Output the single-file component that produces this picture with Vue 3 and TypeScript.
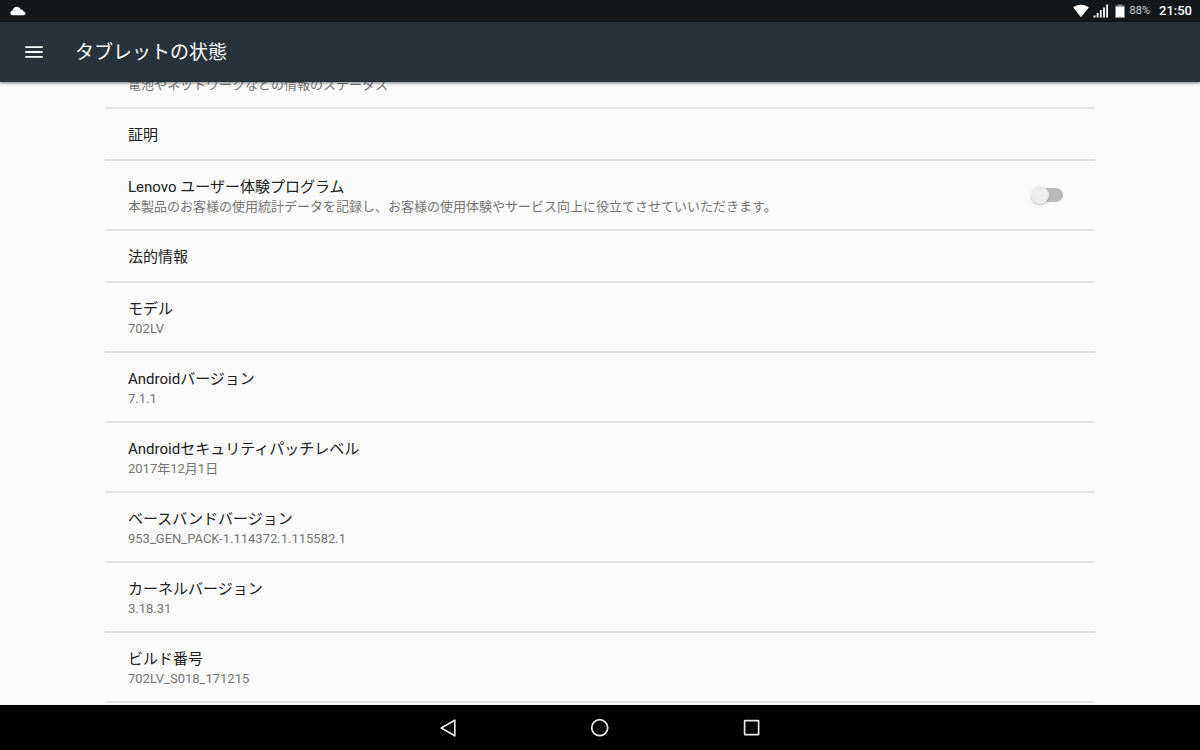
<script setup lang="ts">
import { ref } from 'vue'

interface Entry {
  title?: string
  summary?: string
  toggle?: boolean
}

const joined = ref(false)

const entries: Entry[] = [
  { summary: '電池やネットワークなどの情報のステータス' },
  { title: '証明' },
  {
    title: 'Lenovo ユーザー体験プログラム',
    summary: '本製品のお客様の使用統計データを記録し、お客様の使用体験やサービス向上に役立てさせていいただきます。',
    toggle: true,
  },
  { title: '法的情報' },
  { title: 'モデル', summary: '702LV' },
  { title: 'Androidバージョン', summary: '7.1.1' },
  { title: 'Androidセキュリティパッチレベル', summary: '2017年12月1日' },
  { title: 'ベースバンドバージョン', summary: '953_GEN_PACK-1.114372.1.115582.1' },
  { title: 'カーネルバージョン', summary: '3.18.31' },
  { title: 'ビルド番号', summary: '702LV_S018_171215' },
]
</script>

<template>
  <div class="screen" lang="ja">
    <div class="status">
      <svg class="cloud" width="16" height="10" viewBox="0 0 16 10" aria-hidden="true">
        <path d="M3 9.2C1.400 9.200.4 8.200.4 6.900.4 5.500 1.400 4.600 2.600 4.500 3.200 2.300 4.700.8 6.800.8 8.600.8 10 1.800 10.700 3.500 12.200 3.300 13.300 4.300 13.500 5.600 14.800 5.800 15.500 6.600 15.500 7.500 15.500 8.500 14.700 9.200 13.500 9.200Z" fill="#fff" />
      </svg>
      <div class="indicators">
        <svg width="16" height="14" viewBox="0 0 16 14" aria-hidden="true">
          <path d="M.2 3.400C4.800-.2 11.200-.2 15.800 3.400L8 13.200Z" fill="#fff" />
        </svg>
        <svg class="signal" width="16" height="14" viewBox="0 0 16 14" aria-hidden="true">
          <path d="M.5 11.500h2v2h-2zM3.700 9h1.800v4.500H3.700zM6.900 6h1.800v7.500H6.900zM10.100 3.500h1.800v10h-1.800zM13.200.6h1.800v12.900h-1.800z" fill="#fff" />
        </svg>
        <svg class="battery" width="10" height="14" viewBox="0 0 10 14" aria-hidden="true">
          <path d="M3 .4h4v1.200h2.500v1.200h-9V1.600H3z" fill="#8d9194" />
          <path d="M.5 2.600h9v10.900h-9z" fill="#fff" />
        </svg>
        <span class="percent">88%</span>
        <span class="clock">21:50</span>
      </div>
    </div>

    <header class="toolbar">
      <button class="menu" type="button" aria-label="メニュー">
        <svg width="18" height="12" viewBox="0 0 18 12" aria-hidden="true">
          <path d="M.3.200h17.400v1.800H.3zM.3 5.100h17.400v1.800H.3zM.3 10h17.400v1.800H.3z" fill="#fff" />
        </svg>
      </button>
      <h1>タブレットの状態</h1>
    </header>

    <main class="content">
      <ul class="list">
        <li v-for="(entry, i) in entries" :key="i" class="row" :class="{ single: !entry.summary, partial: !entry.title }">
          <component :is="entry.toggle ? 'label' : 'div'" class="text" :for="entry.toggle ? 'program' : undefined">
            <span v-if="entry.title" class="title">{{ entry.title }}</span>
            <span v-if="entry.summary" class="summary">{{ entry.summary }}</span>
          </component>
          <input v-if="entry.toggle" id="program" v-model="joined" class="switch" type="checkbox" role="switch" />
        </li>
      </ul>
    </main>

    <nav class="navbar">
      <button type="button" aria-label="戻る">
        <svg width="18" height="20" viewBox="0 0 18 20" aria-hidden="true">
          <path d="M15.800 2.200V17.800L2.200 10Z" fill="none" stroke="#e8e8e8" stroke-width="1.700" stroke-linejoin="round" />
        </svg>
      </button>
      <button type="button" aria-label="ホーム">
        <svg width="20" height="20" viewBox="0 0 20 20" aria-hidden="true">
          <circle cx="9.700" cy="9.700" r="8" fill="none" stroke="#e8e8e8" stroke-width="1.700" />
        </svg>
      </button>
      <button type="button" aria-label="最近使ったアプリ">
        <svg width="20" height="20" viewBox="0 0 20 20" aria-hidden="true">
          <rect x="2.600" y="2.700" width="14" height="14" rx=".4" fill="none" stroke="#e8e8e8" stroke-width="1.700" />
        </svg>
      </button>
    </nav>
  </div>
</template>

<style>
body {
  margin: 0;
  background: #fafafa;
}
</style>

<style scoped>
.screen {
  display: flex;
  flex-direction: column;
  height: 100vh;
  overflow: hidden;
  background: #fafafa;
  color: #212121;
  font-family: Roboto, "Noto Sans CJK JP", sans-serif;
}

button {
  display: flex;
  align-items: center;
  justify-content: center;
  padding: 0;
  border: 0;
  background: none;
}

svg {
  display: block;
  flex: none;
}

.status {
  display: flex;
  flex: none;
  align-items: center;
  justify-content: space-between;
  height: 22px;
  padding: 0 8px 0 10px;
  background: #14181b;
  color: #fff;
}

.indicators {
  display: flex;
  align-items: center;
}

.signal {
  margin-left: 4px;
}

.battery {
  margin-left: 6px;
}

.percent {
  margin-left: 5px;
  color: #d8dadb;
  font-size: 11px;
  line-height: 24px;
}

.clock {
  margin-left: 9px;
  font-size: 13px;
  font-weight: 500;
  line-height: 24px;
}

.toolbar {
  position: relative;
  z-index: 1;
  display: flex;
  flex: none;
  align-items: center;
  height: 60px;
  background: #283238;
  box-shadow: 0 1px 3px rgba(0, 0, 0, 0.5);
}

.menu {
  width: 48px;
  height: 48px;
  margin-left: 10px;
}

h1 {
  margin: 0 0 0 17px;
  padding-top: 2px;
  color: #fff;
  font-size: 19px;
  font-weight: 400;
  line-height: 28px;
}

.content {
  flex: 1;
  min-height: 0;
  overflow: hidden;
}

.list {
  margin: -7px 105px 0;
  padding: 0;
  list-style: none;
}

.row {
  display: flex;
  align-items: center;
  justify-content: space-between;
  padding: 16px 32px 12px 23px;
  border-bottom: 2px solid #e3e3e3;
}

.single {
  padding-bottom: 14px;
}

.partial {
  padding-top: 0;
}

.title,
.summary {
  display: block;
  line-height: 20px;
}

.title {
  font-size: 15px;
}

.summary {
  color: #757575;
  font-size: 13px;
}

.switch {
  position: relative;
  flex: none;
  width: 32px;
  height: 20px;
  margin: 0 0 4px;
  appearance: none;
}

.switch::before {
  position: absolute;
  inset: 3px 0 3px 4px;
  border-radius: 7px;
  background: #b9b9b9;
  content: "";
}

.switch::after {
  position: absolute;
  top: 1px;
  left: 0;
  width: 18px;
  height: 18px;
  border-radius: 50%;
  background: #ececec;
  box-shadow: 0 1px 2px rgba(0, 0, 0, 0.25);
  content: "";
}

.switch:checked::before {
  background: #80cbc4;
}

.switch:checked::after {
  right: 0;
  left: auto;
  background: #009688;
}

.navbar {
  display: flex;
  flex: none;
  justify-content: center;
  height: 45px;
  background: #000;
}

.navbar button {
  width: 152px;
  height: 45px;
}
</style>
